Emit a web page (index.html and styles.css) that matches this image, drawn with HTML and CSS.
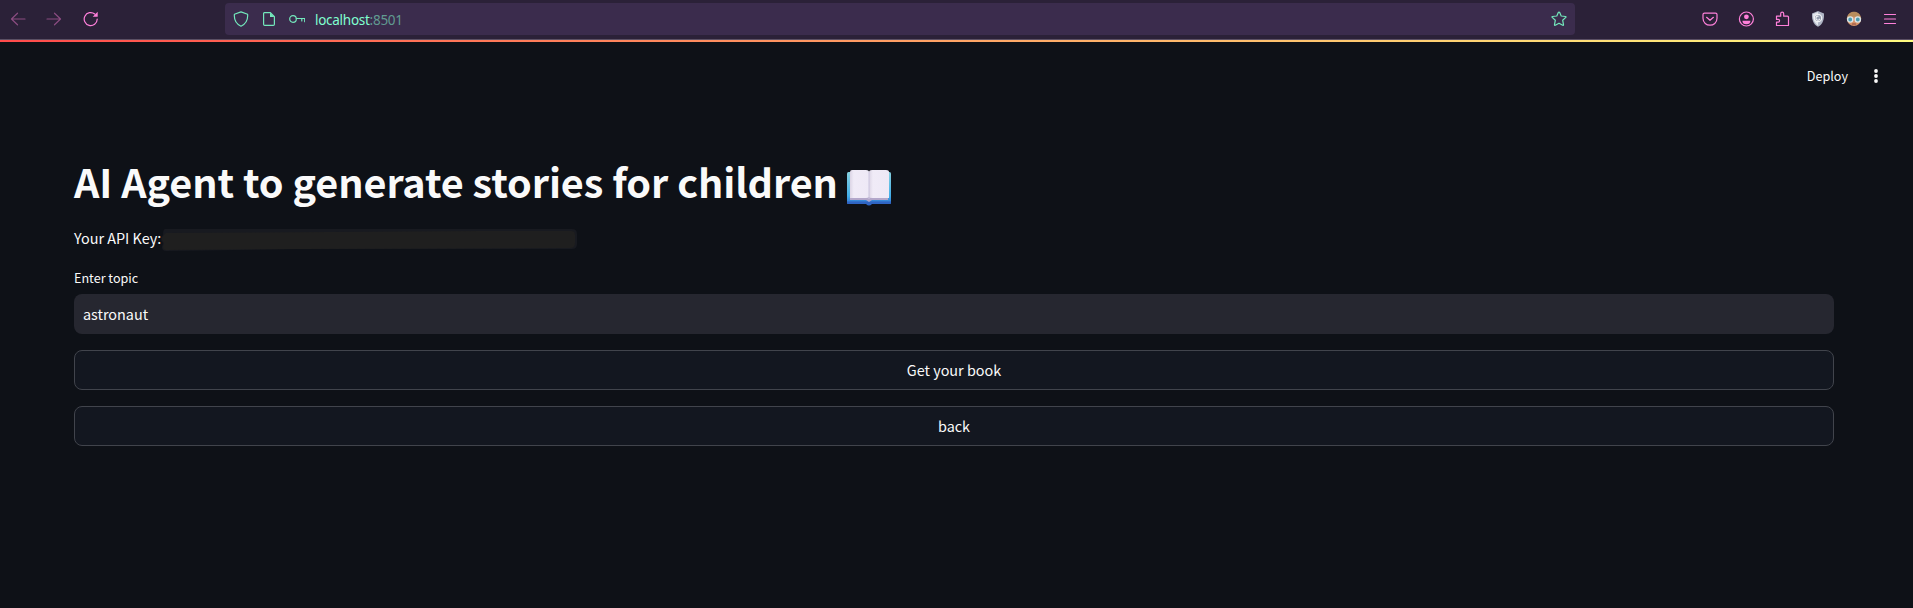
FILE: index.html
```html
<!DOCTYPE html>
<html lang="en">
<head>
<meta charset="utf-8">
<title>AI Agent to generate stories for children</title>
<link rel="stylesheet" href="styles.css">
</head>
<body>
<header class="browser-bar">
  <nav class="nav-icons">
    <svg class="icon dim" viewBox="0 0 16 16"><path d="M15 8H1.5M7.500 2.200 1.500 8l6 5.800"/></svg>
    <svg class="icon dim" viewBox="0 0 16 16"><path d="M1 8h13.500M8.500 2.200l6 5.800-6 5.800"/></svg>
    <svg class="icon reload" viewBox="0 0 16 16"><path d="M14.200 8.200A6.500 6.500 0 1 1 11.800 3"/><path class="solid" d="M14.700.8v5H9.700z"/></svg>
  </nav>
  <div class="address">
    <svg class="icon" viewBox="0 0 16 16"><path d="M8 .9 14.600 3.200c.5 5.600-1.500 9.700-6.600 12-5.100-2.300-7.100-6.400-6.600-12z"/></svg>
    <svg class="icon page-icon" viewBox="0 0 16 16"><path d="M3.400 1.700h6l4 4v7.600q0 1.100-1.100 1.100H3.700q-1.100 0-1.100-1.100V2.700q0-1 .8-1z"/><path class="solid" d="M9 1.500v4.500h4.500z"/></svg>
    <svg class="icon key-icon" viewBox="0 0 16 16"><circle cx="4" cy="8" r="3.300"/><path d="M7.300 7.500h8.400v3.200M12.800 7.500v2.500"/></svg>
    <span class="url">localhost<span class="port">:8501</span></span>
    <svg class="icon star" viewBox="0 0 16 16"><path d="M8 1.100q.5 0 .7.500l1.500 3.400 4.300.5q1 .2.300.9l-3.100 2.900.8 4.400q0 .9-.8.6L8 12.200l-3.700 2.100q-.8.300-.8-.6l.8-4.400-3.100-2.900q-.7-.7.300-.9l4.300-.5 1.500-3.400q.2-.5.700-.5z"/></svg>
  </div>
  <div class="tools">
    <svg class="icon" viewBox="0 0 16 16"><path d="M2.500 2.100h11q1.500 0 1.500 1.400v3.700c0 9.300-14 9.300-14 0V3.500q0-1.400 1.500-1.400zM4.600 6.300 8 9.300l3.400-3"/></svg>
    <svg class="icon" viewBox="0 0 16 16"><circle cx="8.400" cy="8" r="7"/><circle class="solid" cx="8.400" cy="5.800" r="2.400"/><path class="solid" d="M4.400 9.700h8q0 3.600-4 3.600t-4-3.600z"/></svg>
    <svg class="icon" viewBox="0 0 16 16"><path d="M2.500 5.200H6.700V2.700a1.500 1.500 0 0 1 3 0v2.500h3.800q1 0 1 1v8.300H2.500v-3.300h1.700a1.400 1.400 0 0 0 0-2.800H2.500z"/></svg>
    <svg class="icon plain" viewBox="0 0 16 16"><path fill="#aeb4c4" d="M8 0 14 2.400c.3 6-1 10.500-6 13.400-5-2.900-6.300-7.400-6-13.400z"/><path fill="#e2e5ec" d="M8 1 3 3c0 5 1 8.900 5 11.500z"/><circle cx="8" cy="7" r="3.700" fill="#929bad" stroke="#f1f2f5"/><path d="M8 5.200a2 2 0 1 0 1.600 3" fill="none" stroke="#f1f2f5"/></svg>
    <svg class="icon plain" viewBox="0 0 16 16"><circle cx="8" cy="8" r="7" fill="#d79469"/><path fill="#b88d5d" d="M1 8C.8-1.800 15.200-1.800 15 8l-2-2.300H4.500z"/><path stroke="#493a39" d="M0 7.500h3M13 7.500h3"/><circle cx="4.200" cy="8.500" r="2.600" fill="#4b9caf" stroke="#dce5e8" stroke-width="1.400"/><circle cx="11.800" cy="8.500" r="2.600" fill="#4b9caf" stroke="#dce5e8" stroke-width="1.400"/><path stroke="#904b40" d="M6.500 13h3"/></svg>
    <svg class="icon menu-icon" viewBox="0 0 16 16"><path d="M2.500 3.500h11M2.500 8h11M2.500 12.500h11"/></svg>
  </div>
</header>
<div class="decoration"></div>
<div class="app-toolbar">
  <span class="deploy">Deploy</span>
  <svg class="dots" viewBox="0 0 4 14"><circle cx="2" cy="2" r="1.900"/><circle cx="2" cy="7" r="1.900"/><circle cx="2" cy="12" r="1.900"/></svg>
</div>
<main class="content">
  <h1 class="title"><span class="title-text">AI Agent to generate stories for children</span>
    <svg class="book" viewBox="0 0 44 36">
      <defs><linearGradient id="cover" x2="0" y2="1"><stop stop-color="#86d0df"/><stop offset=".75" stop-color="#42aee8"/><stop offset="1" stop-color="#306fd0"/></linearGradient><linearGradient id="paper"><stop stop-color="#dcd5e5"/><stop offset=".2" stop-color="#f0ebf7"/><stop offset="1" stop-color="#eee9f6"/></linearGradient></defs>
      <rect y="2" width="44" height="32" rx="1.500" fill="url(#cover)"/>
      <path fill="#2f65c4" d="M0 31.500h44V33q0 1-1 1H25q-3 3-6 0H1q-1 0-1-1z"/>
      <path fill="#b3a7ca" d="M3 3h38v27H25l-3 2-3-2H3z"/>
      <path fill="url(#paper)" d="M5 0h14q3 0 3 2v25q-1 1-3 1H3V2q0-2 2-2z"/>
      <path fill="url(#paper)" d="M25 0h14q3 0 3 2v26H25q-3 0-3-1V2q0-2 3-2z"/>
      <path stroke="#cbc4df" d="M22 2v27"/>
    </svg>
  </h1>
  <p class="key-row"><span class="key-label">Your API Key:</span>
    <svg class="redaction" viewBox="0 0 416 23"><path fill="#181a20" d="M4 0h407q5 0 5 5v10q0 5-5 5L140 20 5 22Q1 22 1 18l1-4q-4-4 0-8 0-6 2-6z"/><path fill="#1f1f1f" d="M5 4 320 2h90q4 0 4 4v8q0 5-5 5L140 20 5 21Q2 21 2 18l1-4q-4-4 0-8z"/></svg>
  </p>
  <label class="topic-label" for="topic">Enter topic</label>
  <input class="topic-input" id="topic" value="astronaut">
  <button class="action">Get your book</button>
  <button class="action">back</button>
</main>
</body>
</html>
```
FILE: styles.css
```css
* { box-sizing: border-box; }
body {
  margin: 0;
  height: 608px;
  overflow: hidden;
  background: #0e1117;
  color: #fafafa;
  font-family: "Noto Sans CJK JP", "Noto Sans", sans-serif;
}
.browser-bar {
  height: 40px;
  display: grid;
  grid-template-columns: 225px 1350px 1fr;
  align-items: start;
  background: #2b2138;
  border-bottom: 1px solid #5b5064;
}
.icon {
  width: 16px;
  height: 16px;
  flex: none;
  display: block;
  fill: none;
  stroke: currentColor;
  stroke-width: 1.2;
  stroke-linejoin: round;
  stroke-linecap: round;
}
.icon .solid { fill: currentColor; stroke: none; }
.icon.plain { stroke: none; }
.nav-icons { display: flex; gap: 20px; padding: 11px 0 0 10px; color: #ff80da; }
.dim { opacity: .45; }
.address {
  height: 32px;
  margin-top: 3px;
  padding: 0 8px;
  display: flex;
  align-items: center;
  border-radius: 4px;
  background: #3b2c4d;
  color: #73e8bc;
}
.page-icon { margin-left: 12px; }
.key-icon { margin-left: 12px; }
.url {
  margin-left: 10px;
  padding-top: 2px;
  font: 13.5px/20px "Noto Sans", sans-serif;
  letter-spacing: -.27px;
  color: #80ffd0;
}
.port { color: #619b91; }
.star { margin-left: auto; }
.tools { display: flex; gap: 20px; padding: 11px 0 0 127px; color: #ff80da; }
.decoration { height: 2px; background: linear-gradient(90deg, #ff4b4b, #fffd80); }
.app-toolbar {
  height: 68px;
  display: flex;
  align-items: center;
  justify-content: flex-end;
  gap: 26px;
  padding: 0 35px 0 0;
}
.deploy { font-size: 12.6px; line-height: 20px; }
.reload { margin-left: 1px; }
.dots { width: 4px; height: 14px; fill: #fafafa; }
.content {
  display: flex;
  flex-direction: column;
  padding: 44px 79px 0 74px;
}
.title {
  display: flex;
  align-items: flex-start;
  height: 53px;
  margin: 0;
  font-size: 39.6px;
  line-height: 53px;
  letter-spacing: -.075px;
  font-weight: 700;
  white-space: nowrap;
}
.book { width: 44px; height: 36px; margin: 16px 0 0 9px; }
.key-row {
  display: flex;
  align-items: center;
  height: 24px;
  margin: 19px 0 0;
  font-size: 14.4px;
  line-height: 24px;
}
.redaction { width: 416px; height: 23px; margin: 5px 0 0; }
.topic-label { height: 20px; margin: 18px 0 6px; font-size: 12.6px; line-height: 20px; }
.topic-input {
  height: 40px;
  padding: 0 9px 1px;
  border: 0;
  border-radius: 8px;
  background: #262730;
  color: #fafafa;
  font: 14.4px "Noto Sans CJK JP", sans-serif;
  outline: 0;
}
.action {
  height: 40px;
  margin-top: 16px;
  padding: 0 0 2px;
  border: 1px solid #41444c;
  border-radius: 8px;
  background: #131720;
  color: #fafafa;
  font: 14.4px "Noto Sans CJK JP", sans-serif;
}
```
